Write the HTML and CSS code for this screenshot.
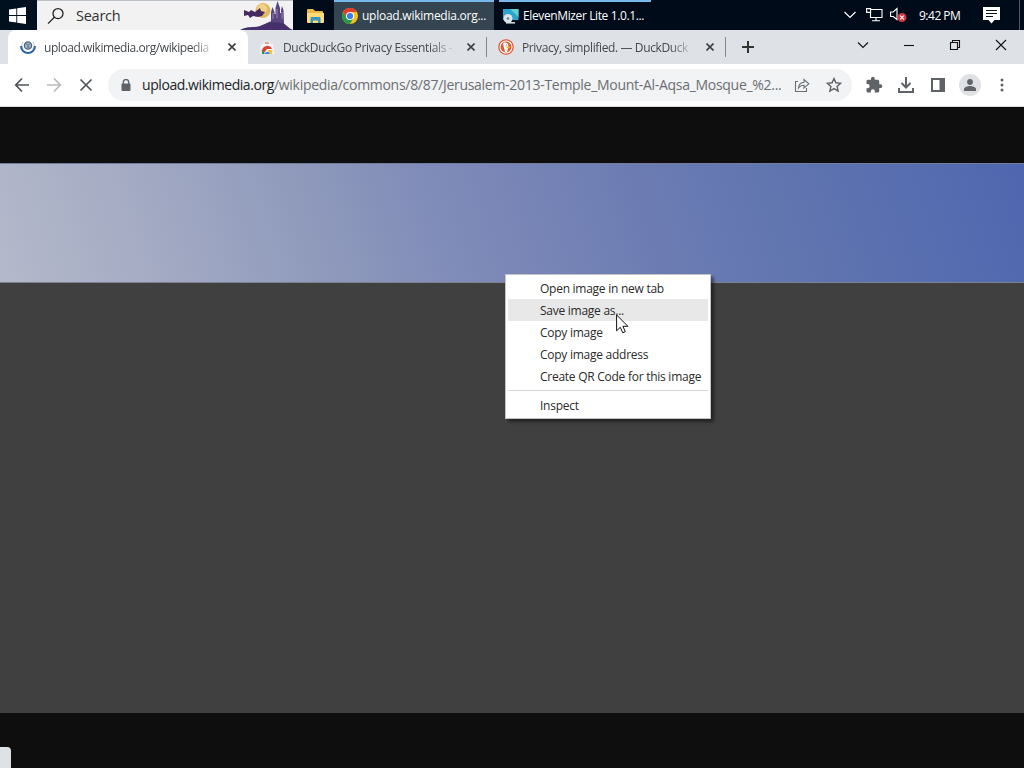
FILE: index.html
```html
<!DOCTYPE html>
<html lang="en">
<head>
    <meta charset="UTF-8">
    <meta name="viewport" content="width=device-width, initial-scale=1.0">
    <title>upload.wikimedia.org</title>
    <link rel="stylesheet" href="styles.css">
</head>
<body>
    <!-- Taskbar -->
    <div class="taskbar">
        <div class="start">
            <svg width="17" height="17" viewBox="0 0 17 17" fill="#fff"><path d="M0 2.4 7.3 1.4V8H0zM8.2 1.2 17 0v8H8.2zM0 8.9h7.3v6.7L0 14.6zM8.2 8.9H17V17l-8.8-1.2z"/></svg>
        </div>
        <div class="search">
            <svg class="search-icon" width="18" height="18" viewBox="0 0 18 18" fill="none" stroke="#222" stroke-width="1.3"><circle cx="11" cy="6.6" r="5"/><path d="M7.4 10.2 1 16.6"/></svg>
            <span class="search-text">Search</span>
            <svg class="castle" width="53" height="29" viewBox="0 0 53 29">
                <circle cx="23" cy="9.5" r="7.5" fill="#e3b863"/>
                <circle cx="22" cy="8" r="5" fill="#f0d18a"/>
                <path d="M4 9l5 2 2-2 4 2 5-4 1 3 4 1-3 4-4 1-5-1-3 2-2-3-4 1z" fill="#46295f"/>
                <path d="M0 29c7-4 14-2 20-4 5-2 8-4 12-5l8-1c3 2 4 4 7 6 2 2 4 3 6 4z" fill="#46306b"/>
                <path d="M31 21V11l1.500-5 2 5v2h1V7L37.500 0 40 7v5h1V9l1-4 1.500 4 .5 13z" fill="#584680"/>
                <path d="M37 8v9M33 12v6M42 11v7" stroke="#9b82ab"/>
            </svg>
        </div>
        <div class="explorer">
            <svg width="17" height="14" viewBox="0 0 17 14"><path d="M0 1q0-1 1-1h5l2 2h7q1 0 1 1v10H0z" fill="#e9b944"/><path d="M0 4h17v9q0 1-1 1H1q-1 0-1-1z" fill="#ffdc78"/><path d="M3.5 14V9q0-1 1-1h8q1 0 1 1v5H11v-2.500H6V14z" fill="#3b93c4"/></svg>
        </div>
        <div class="task active">
            <svg width="16" height="16" viewBox="0 0 16 16"><circle cx="8" cy="8" r="8" fill="#fbc116"/><path d="M1.070 4A8 8 0 0 1 14.930 4H8L4.540 10z" fill="#e33b2e"/><path d="M1.070 4A8 8 0 0 0 8 16L11.460 10 8 11.500 4.540 10z" fill="#229a4a"/><circle cx="8" cy="8" r="4" fill="#fff"/><circle cx="8" cy="8" r="3.100" fill="#3c7de6"/></svg>
            <span class="task-chrome">upload.wikimedia.org...</span>
        </div>
        <div class="task">
            <svg width="16" height="16" viewBox="0 0 16 16"><path d="M0 1h15.500v11H0z" fill="#2ba5d0"/><path d="M7 1h8.500v8z" fill="#65cfcf"/><path d="M3 14h9v1.600H3z" fill="#c9d5dc"/><circle cx="5" cy="10.500" r="4.500" fill="#dce3e9"/><circle cx="5" cy="10.500" r="1.300" fill="#65829a"/></svg>
            <span class="task-eleven">ElevenMizer Lite 1.0.1...</span>
        </div>
        <div class="tray">
            <svg width="12" height="8" viewBox="0 0 12 8" fill="none" stroke="#fff" stroke-width="1.200"><path d="M.500 1 6 6.500 11.500 1"/></svg>
            <svg class="network" width="17" height="14" viewBox="0 0 17 14" fill="none" stroke="#fff" stroke-width="1.100"><path d="M5 1.500h11v8H4.500V5M10 9.500v3M6 12.800h8M.600.600h4v3.800h-4z"/></svg>
            <svg class="volume" width="17" height="16" viewBox="0 0 17 16"><path d="M.600 5h2.600L7 1.500v11L3.200 9.500H.600z" fill="none" stroke="#fff" stroke-width="1.100"/><circle cx="12" cy="10.500" r="4.500" fill="#cf3945"/><path d="m10.200 8.700 3.600 3.600m0-3.600-3.600 3.600" stroke="#fff" stroke-width="1.100"/></svg>
            <span class="clock">9:42 PM</span>
            <svg class="notice" width="17" height="17" viewBox="0 0 17 17"><path d="M0 0h17v13h-5.500L8.500 16.500 5.500 13H0z" fill="#fff"/><path d="M3 3.500h11M3 6.500h11M3 9.500h7" stroke="#07101f" stroke-width="1.200"/></svg>
            <div class="desktop-edge"></div>
        </div>
    </div>

    <!-- Browser tabs -->
    <div class="tabs">
        <div class="tab tab-active">
            <svg width="16" height="16" viewBox="0 0 16 16" fill="none"><circle cx="8" cy="6.500" r="3.600" fill="#a9bac8" stroke="#4c657b" stroke-width="1.300"/><path d="M6 4.500 8 6.500l2-2M7 8h2.500" stroke="#40566c"/><path d="M3 2.500a6.400 6.400 0 0 0 0 7.500M13 2.500a6.400 6.400 0 0 1 0 7.500" stroke="#a3b9d4" stroke-width=".8"/><path d="M1 7a7 7 0 0 0 14 0" stroke="#2f63ab" stroke-width="2"/></svg>
            <span class="tab-title title-upload">upload.wikimedia.org/wikipedia</span>
            <svg class="close" width="8" height="8" viewBox="0 0 8 8"><path d="m.500.500 7 7m0-7-7 7"/></svg>
        </div>
        <div class="tab">
            <svg width="16" height="16" viewBox="0 0 16 16"><path d="M2 5h12l1.500 10H1z" fill="#f4f5f6"/><path d="M5 5V2.500h6V5" fill="none" stroke="#e7e9eb" stroke-width="1.500"/><path d="M3 11a5.300 5.300 0 0 1 10-1H8l-3 4H4z" fill="#db4437"/><path d="M2.700 10.500 6 15H3z" fill="#159957"/><path d="M9 11h4.500l-.500 4h-3z" fill="#f6c33c"/><path d="M6 15a2.300 2.300 0 0 1 4.600 0z" fill="#4285f4"/><path d="M6 4h4" stroke="#df6c65"/></svg>
            <span class="tab-title title-essentials">DuckDuckGo Privacy Essentials -</span>
            <svg class="close" width="8" height="8" viewBox="0 0 8 8"><path d="m.500.500 7 7m0-7-7 7"/></svg>
        </div>
        <div class="separator"></div>
        <div class="tab">
            <svg width="16" height="16" viewBox="0 0 16 16"><circle cx="8" cy="8" r="7.800" fill="#de5833"/><circle cx="8" cy="8" r="6" fill="none" stroke="#fff" stroke-width="1.100"/><path d="M5 5c.600-1.600 2.700-2 4.200-.700 1.400 1.200 1.200 3.500.9 4.700L9 13.300 7 13z" fill="#fff"/><path d="M8.500 7.500h4l-1 1.700h-3z" fill="#f7b82c"/><circle cx="8.300" cy="6" r=".6" fill="#304c69"/></svg>
            <span class="tab-title title-simplified">Privacy, simplified. — DuckDuck</span>
            <svg class="close" width="8" height="8" viewBox="0 0 8 8"><path d="m.500.500 7 7m0-7-7 7"/></svg>
        </div>
        <div class="separator"></div>
        <svg class="new-tab" width="12" height="12" viewBox="0 0 12 12"><path d="M6 0v12M0 6h12" stroke="#333" stroke-width="2"/></svg>
        <div class="window-buttons">
            <svg width="12" height="12" viewBox="0 0 12 12"><path d="M1 3.500 6 8.500l5-5"/></svg>
            <svg width="12" height="12" viewBox="0 0 12 12"><path d="M1 6.500h10"/></svg>
            <svg width="12" height="12" viewBox="0 0 12 12"><path d="M1.500 3.500h7v7h-7zM3.500 3.500v-2h7v7h-2"/></svg>
            <svg width="12" height="12" viewBox="0 0 12 12"><path d="m1 1 10 10M11 1 1 11"/></svg>
        </div>
    </div>

    <!-- Address bar -->
    <div class="toolbar">
        <div class="nav">
            <svg width="16" height="16" viewBox="0 0 16 16"><path d="M15 8H2M8 1.500 1.700 8 8 14.500"/></svg>
            <svg class="disabled" width="16" height="16" viewBox="0 0 16 16"><path d="M1 8h13M8 1.500 14.300 8 8 14.500"/></svg>
            <svg width="16" height="16" viewBox="0 0 16 16"><path d="m2.500 2.500 11 11m0-11-11 11"/></svg>
        </div>
        <div class="address">
            <svg class="lock" width="10" height="12" viewBox="0 0 10 12"><path d="M2.300 5V3.300a2.700 2.700 0 0 1 5.400 0V5" fill="none" stroke="#5f6368" stroke-width="1.300"/><rect x=".5" y="4.500" width="9" height="7.500" rx="1" fill="#5f6368"/></svg>
            <span class="url"><span class="host">upload.wikimedia.org</span>/wikipedia/commons/8/87/Jerusalem-2013-Temple_Mount-Al-Aqsa_Mosque_%2...</span>
            <svg class="share" width="16" height="16" viewBox="0 0 16 16" fill="none" stroke="#6c7075" stroke-width="1.100"><path d="M4 4.500H1.500v10h11V11M4.500 11c.3-3.700 2.300-5.400 5.500-5.700V2.500l4.800 4.300L10 11V8.300c-2.500 0-4.200.900-5.500 2.700z"/></svg>
            <svg class="star" width="16" height="16" viewBox="0 0 16 16" fill="none" stroke="#5f6368" stroke-width="1.400"><path d="m8 1.500 1.900 4.300 4.700.500-3.500 3.100 1 4.600L8 11.600 3.900 14l1-4.600-3.500-3.100 4.700-.500z"/></svg>
        </div>
        <div class="actions">
            <svg width="18" height="18" viewBox="0 0 24 24" fill="#5f6368"><path d="M20.500 11H19V7c0-1.100-.9-2-2-2h-4V3.500a2.500 2.500 0 0 0-5 0V5H4c-1.100 0-2 .9-2 2v3.800h1.500a2.700 2.700 0 0 1 0 5.400H2V20c0 1.100.9 2 2 2h3.800v-1.500a2.700 2.700 0 0 1 5.400 0V22H17c1.100 0 2-.9 2-2v-4h1.500a2.500 2.500 0 0 0 0-5z"/></svg>
            <svg width="18" height="18" viewBox="0 0 18 18" fill="none" stroke="#5f6368" stroke-width="2"><path d="M9 1v10M4.500 7 9 11.500 13.500 7M2 12v4h14v-4"/></svg>
            <svg width="18" height="18" viewBox="0 0 18 18"><path d="M3 3h12v12H3z" fill="none" stroke="#5f6368" stroke-width="2"/><path d="M10.500 3H15v12h-4.500z" fill="#5f6368"/></svg>
            <div class="avatar"><svg width="12" height="12" viewBox="0 0 12 12" fill="#5f6368"><circle cx="6" cy="3" r="2.900"/><path d="M0 12v-2c0-2 4-3 6-3s6 1 6 3v2z"/></svg></div>
            <svg width="18" height="18" viewBox="0 0 18 18" fill="#5f6368"><circle cx="9" cy="4" r="1.500"/><circle cx="9" cy="9" r="1.500"/><circle cx="9" cy="14" r="1.500"/></svg>
        </div>
    </div>

    <!-- Image viewer -->
    <div class="viewer">
        <div class="image">
            <div class="sky"></div>
        </div>
        <div class="status"></div>
    </div>

    <div class="menu">
        <div class="item">Open image in new tab</div>
        <div class="item hovered">Save image as...</div>
        <div class="item">Copy image</div>
        <div class="item">Copy image address</div>
        <div class="item">Create QR Code for this image</div>
        <div class="line"></div>
        <div class="item">Inspect</div>
    </div>
    <svg class="cursor" width="13" height="20" viewBox="0 0 13 20"><path d="M.600 1v15.800l3.700-3.500 2.500 5.500 2.500-1.100-2.400-5.400h5z" fill="#fff" stroke="#111" stroke-width="1"/></svg>
</body>
</html>
```

FILE: styles.css
```css
* {
    box-sizing: border-box;
}

body {
    font-family: "Open Sans", "Noto Sans", sans-serif;
    font-size: 12px;
    background-color: #0e0e0e;
    margin: 0;
    height: 768px;
    display: flex;
    flex-direction: column;
    overflow: hidden;
    white-space: nowrap;
}

svg {
    display: block;
    flex-shrink: 0;
}

/* Taskbar */
.taskbar {
    height: 30px;
    display: flex;
    background-color: #000b1a;
    color: #fff;
}

.start {
    width: 37px;
    padding: 7px 0 0 9px;
    background-color: #00101f;
}

.search {
    width: 256px;
    display: flex;
    align-items: center;
    padding-left: 10px;
    border-top: 1px solid #b9bfc4;
    background-color: #f2f2f2;
    color: #333;
}

.search-text {
    font-size: 14.5px;
    letter-spacing: -0.25px;
    margin-left: 11px;
}

.castle {
    margin-left: auto;
}

.explorer {
    width: 41px;
    padding: 9px 0 0 14px;
}

.task {
    width: 152px;
    height: 30px;
    margin-left: 5px;
    padding: 0 4px;
    border-top: 2px solid #76b9ed;
    display: flex;
    align-items: center;
    gap: 4px;
}

.task.active {
    width: 160px;
    margin-left: 0;
    padding-left: 8px;
    background-color: #344451;
}

.task span {
    line-height: 26px;
}

.task-chrome {
    letter-spacing: -0.25px;
}

.task-eleven {
    letter-spacing: -0.38px;
}

.tray {
    margin-left: auto;
    display: flex;
    align-items: center;
}

.network {
    margin-left: 10px;
}

.volume {
    margin-left: 7px;
}

.clock {
    width: 43px;
    margin-left: 12px;
    letter-spacing: -0.5px;
}

.notice {
    margin-left: 21px;
}

.desktop-edge {
    width: 5px;
    height: 30px;
    margin-left: 19px;
    border-left: 1px solid #4c5867;
}

/* Tabs */
.tabs {
    height: 34px;
    padding-left: 8px;
    display: flex;
    align-items: center;
    background-color: #dee1e6;
    color: #45494d;
}

.tab {
    width: 238px;
    height: 34px;
    padding: 0 11px;
    display: flex;
    align-items: center;
}

.tab-active {
    width: 240px;
    padding: 0 12px;
    border-radius: 8px 8px 0 0;
    background-color: #fff;
}

.tab-title {
    width: 172px;
    margin: 0 12px 0 8px;
    -webkit-mask-image: linear-gradient(to right, #000 86%, transparent);
    mask-image: linear-gradient(to right, #000 86%, transparent);
}

.title-upload {
    letter-spacing: -0.43px;
}

.title-essentials {
    letter-spacing: -0.34px;
}

.title-simplified {
    letter-spacing: -0.38px;
}

.close {
    fill: none;
    stroke: #3c4043;
    stroke-width: 1.6;
}

.separator {
    width: 1px;
    height: 20px;
    background-color: #85898e;
}

.new-tab {
    margin-left: 16px;
}

.window-buttons {
    margin: -5px 17px 0 auto;
    display: flex;
    gap: 34px;
}

.window-buttons svg {
    fill: none;
    stroke: #111;
    stroke-width: 1.1;
}

/* Toolbar */
.toolbar {
    height: 43px;
    padding: 5px 13px 6px 14px;
    border-bottom: 1px solid #dadce0;
    display: flex;
    align-items: center;
    background-color: #fff;
}

.nav {
    display: flex;
    gap: 16px;
}

.nav svg {
    fill: none;
    stroke: #505459;
    stroke-width: 1.7;
}

.nav .disabled {
    stroke: #b8babd;
}

.address {
    width: 744px;
    height: 32px;
    margin-left: 14px;
    padding: 0 10px 0 13px;
    border-radius: 16px;
    display: flex;
    align-items: center;
    background-color: #f1f3f4;
}

.url {
    margin-left: 11px;
    font-size: 14px;
    letter-spacing: -0.29px;
    color: #6b6f73;
}

.host {
    letter-spacing: -0.43px;
    color: #222528;
}

.share {
    margin-left: auto;
}

.star {
    margin-left: 16px;
}

.actions {
    margin-left: 13px;
    display: flex;
    align-items: center;
    gap: 14px;
}

.avatar {
    width: 22px;
    height: 22px;
    margin: 0 -2px;
    border-radius: 50%;
    display: flex;
    justify-content: center;
    align-items: center;
    background-color: #dfe1e5;
}

/* Image being loaded */
.viewer {
    flex: 1;
    padding-top: 56px;
    display: flex;
    flex-direction: column;
    justify-content: space-between;
}

.image {
    height: 550px;
    background-color: #404040;
}

.sky {
    height: 120px;
    border-top: 1px solid #747c9d;
    border-bottom: 1px solid #7d8390;
    background: linear-gradient(72deg, #b4b9ca 0%, #a5acc4 14%, #909bbc 30%, #7e8ab8 45%, #6d7db3 62%, #5e73af 79%, #4f67b0 100%);
}

.status {
    width: 11px;
    height: 21px;
    border-radius: 0 4px 0 0;
    background-color: #dee1e6;
}

/* Context menu */
.menu {
    position: absolute;
    left: 505px;
    top: 274px;
    width: 206px;
    height: 145px;
    padding: 2px;
    border: 1px solid #c4c4c4;
    background-color: #fff;
    box-shadow: 3px 3px 3px rgba(0, 0, 0, 0.45);
    color: #2b2b2b;
    letter-spacing: -0.26px;
}

.item {
    height: 22px;
    padding-left: 32px;
    line-height: 23px;
}

.hovered {
    background-color: #e8e8e8;
}

.line {
    height: 1px;
    margin: 3px 0;
    background-color: #d5d5d5;
}

.cursor {
    position: absolute;
    left: 616px;
    top: 314px;
}
```
